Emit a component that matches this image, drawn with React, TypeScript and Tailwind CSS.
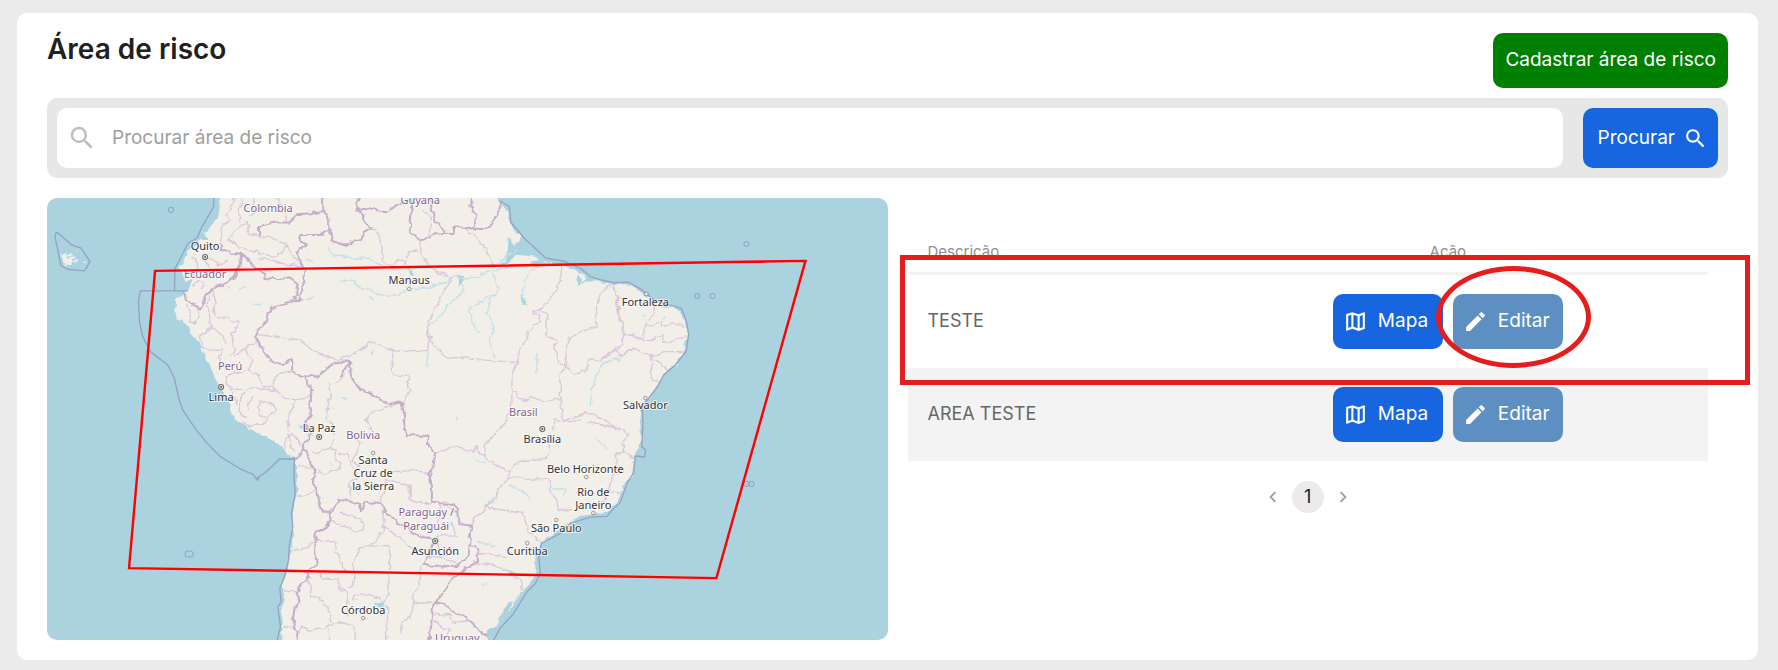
import { MdChevronLeft, MdChevronRight, MdEdit, MdOutlineMap, MdSearch } from "react-icons/md";

const LAND =
  "M517,-20 517,46 502,76 467,106 482,126 457,126 427,156 415,176 397,211 412,236 432,266 417,281 387,306 385,336 392,361 407,371 427,388 442,416 459,441 477,486 497,521 512,556 532,586 552,631 552,651 572,671 597,686 647,714 687,734 709,751 719,766 742,784 747,816 751,876 742,916 737,956 737,1026 732,1051 725,1096 719,1126 705,1161 711,1196 703,1226 703,1286 702,1346 L1329,1346 1314,1316 1334,1291 1359,1276 1389,1236 1419,1186 1449,1156 1464,1136 1464,1066 1479,1036 1509,1016 1539,991 1589,956 1629,946 1679,941 1709,916 1724,866 1754,836 1759,776 1774,746 1781,726 1779,666 1784,616 1809,596 1834,556 1859,516 1884,501 1904,466 1921,416 1914,376 1902,341 1874,328 1844,326 1819,306 1779,281 1749,259 1699,261 1659,251 1614,251 1599,261 1614,241 1589,216 1559,206 1529,198 1479,191 1464,176 1409,171 1399,166 1369,186 1399,151 1419,126 1419,106 1394,91 1384,66 1379,36 1364,16 1339,-20Z";

// each sector keeps its own origin inside the map
const SECTORS = [
  {
    origin: "translate(-3 -24)",
    countries:
      "M525,165 525,182 545,180 560,190 585,195 605,205 615,225 640,240 655,255 655,268 680,264 700,268 730,262 755,280 750,300 755,315 745,325 760,333 M585,195 580,230 565,260 545,278 530,285 510,290 495,300 478,315 470,340 462,355 445,350 440,340 420,330 415,305 M640,140 638,110 665,102 690,97 730,98 745,80 760,72 800,70 838,62 M830,24 832,60 848,95 850,120 858,150 880,165 900,162 M855,125 835,125 825,135 762,135 765,155 785,165 780,172 758,175 757,205 765,220 775,235 772,265 760,333 730,335 690,348 665,365 660,395 635,425 630,440 640,465 655,480 660,500 685,520 715,522 738,505 738,545 755,555 780,560 820,555 850,530 870,520 900,515 M775,558 785,580 800,600 792,620 790,640 795,660 790,680 775,700 785,720",
    states:
      "M560,24 555,60 540,75 550,90 530,110 520,150 525,165 M590,24 575,70 580,90 M620,24 625,70 610,80 M690,24 720,60 720,98 M600,95 570,120 545,150 M600,95 610,130 640,140 660,142 680,140 720,165 740,200 775,235 M545,150 580,170 640,190 690,200 700,190 725,170 M640,205 700,220 760,228 M635,435 760,450 800,480 850,505 900,515 M500,300 510,340 500,370 510,385 545,380 550,395 575,390 575,410 558,430 560,465 565,480 555,500 M425,345 435,375 430,400 450,400 460,375 455,355 M495,310 480,345 490,370 492,400 500,410 480,430 460,440 470,475 500,480 530,475 520,500 525,530 M500,410 530,440 540,465 M565,500 600,470 625,460 630,440 M600,475 605,500 620,515 610,540 560,550 540,560 545,585 565,600 585,595 M610,540 640,560 650,590 680,590 690,600 650,600 620,590 600,600 M680,590 685,560 710,550 738,545 M690,600 715,625 750,630 785,620 M750,630 735,660 725,690 730,720 M600,600 580,630 580,665 600,680 M620,620 605,640 605,660 M640,635 635,675 660,685 690,660 680,645 660,640 640,635 M540,575 560,610 570,640 M850,580 855,610 845,650 840,690 M470,210 500,205 515,225 540,215 M440,200 455,225 440,255 460,270 440,290 M480,215 490,235 M460,270 475,280 465,300 M870,580 900,550",
    water: "M848,170 850,190 880,200 900,198 M545,290 550,300 M580,300 600,290 M620,345 640,340 M780,210 800,215 M770,330 800,325 M855,655 860,655 M888,625 898,625",
  },
  {
    origin: "translate(879 -24)",
    countries:
      "M60,24 48,40 52,55 100,60 140,65 170,45 210,30 M52,60 70,75 68,90 95,115 75,125 60,145 20,165 0,165 M215,30 220,60 210,80 208,100 215,130 245,152 280,135 315,128 300,105 285,90 275,60 270,30 M315,128 340,130 342,110 380,115 400,110 405,75 390,50 392,24 M385,115 440,118 460,95 480,50 485,30 M0,515 30,515 32,560 60,600 85,608 140,640 185,642 195,680 195,720 M28,515 0,560",
    states:
      "M242,152 242,190 260,220 300,250 335,262 M380,120 385,130 415,145 435,175 455,220 460,228 M95,115 115,130 125,175 130,215 150,228 155,238 155,225 175,210 195,220 205,185 242,182 M335,262 320,290 258,412 268,435 262,482 155,482 135,475 115,458 85,457 75,470 45,490 30,500 0,505 M268,435 283,470 315,500 400,508 528,517 M155,485 157,553 205,560 205,585 212,600 190,642 M665,228 660,270 635,320 610,350 580,367 598,375 595,395 565,425 560,450 540,480 528,517 515,555 515,605 530,605 535,625 565,630 570,620 600,630 615,635 660,625 660,575 658,560 675,530 655,515 650,490 640,475 650,458 615,430 620,405 620,375 600,367 M820,285 830,320 835,360 850,410 845,460 800,500 775,510 745,510 740,540 705,552 675,530 680,465 690,440 720,425 770,410 765,375 775,320 800,290 820,285 M515,605 515,640 500,685 480,720 M660,625 668,695 735,668 780,680 830,720 M668,695 640,690 640,720 M75,690 100,665 160,645 M75,690 95,720 M248,60 270,85 272,110 260,145 M850,435 880,435 900,450 M830,480 842,500 880,475 900,480",
    water:
      "M0,200 50,205 90,205 130,230 M0,270 40,275 60,295 90,300 130,320 160,318 210,298 280,290 320,275 340,255 370,268 410,262 450,240 500,232 560,225 580,215 M370,270 365,310 320,350 290,390 265,405 M460,250 475,300 450,330 440,370 465,415 445,440 455,480 470,500 M390,350 430,330 470,310 M385,350 400,400 415,430 M580,235 555,265 548,310 560,350 M480,225 500,195 535,180 M590,490 590,550 M790,520 810,512 838,505 M790,515 770,550 755,600 750,650 M85,320 100,330 M260,490 260,530 M350,690 350,685 M10,625 20,622 M95,480 98,490",
  },
  {
    origin: "translate(-3 666)",
    countries:
      "M785,30 790,40 772,78 788,110 795,135 808,150 800,180 815,220 820,250 830,275 850,275 870,255 885,238 900,245 M850,275 853,300 840,322 808,340 808,400 815,430 790,445 785,470 768,490 755,520 760,545 745,560 740,600 750,630 755,660 M772,80 765,105 750,115 738,117",
    states:
      "M590,5 610,20 650,10 660,0 M712,85 720,60 740,38 755,60 765,75 M750,140 790,142 M755,225 775,230 800,212 M740,388 785,382 790,370 808,368 M808,362 865,362 870,375 863,395 885,405 885,440 900,450 M800,100 850,85 870,90 865,115 885,130 880,145 850,155 835,165 810,158 M860,60 855,80 M850,0 865,40 M855,300 885,320 900,318 M818,460 830,475 870,480 885,510 900,512 M780,480 792,500 790,525 820,532 850,570 853,600 865,612 M715,510 730,515 740,508 758,520 M712,620 740,622 M755,635 770,618 790,630 840,625 845,612 900,612 M850,625 850,660 M725,45 740,90",
    water: "M818,150 825,158 M850,125 858,132 M828,232 830,233 M762,15 770,25 M790,40 798,48",
  },
  {
    origin: "translate(879 666)",
    countries:
      "M190,0 198,45 262,48 260,75 285,100 280,135 268,165 275,200 275,248 340,252 350,265 355,310 395,318 390,370 385,405 360,430 345,440 320,440 252,435 262,410 282,362 235,345 175,310 140,280 120,252 75,245 62,270 55,250 30,245 0,238 M385,375 405,378 412,395 413,425 375,445 340,475 300,530 280,550 275,590 270,640 265,660 M280,550 300,545 320,560 340,575 380,595 410,625 435,645",
    states:
      "M285,100 340,80 400,95 410,80 415,100 432,105 M500,0 435,75 435,115 470,135 505,155 525,130 570,120 620,115 628,90 625,50 M505,155 505,175 480,200 465,235 440,262 M505,172 540,170 560,178 625,175 635,220 650,240 655,275 690,265 M440,262 520,275 545,280 560,320 560,335 595,360 605,370 M440,262 405,290 395,318 M413,400 480,405 495,412 M413,430 460,435 520,460 530,480 545,485 545,510 M160,155 235,150 268,165 M120,252 130,215 140,180 190,190 210,200 210,240 230,248 275,248 M130,260 128,320 130,330 95,375 M62,380 148,376 148,455 145,500 135,550 145,580 138,620 140,660 M62,380 40,430 45,455 40,490 28,500 M130,320 165,340 235,405 M245,440 235,500 220,515 220,550 270,548 M220,550 210,590 185,610 185,640 M275,585 330,580 M280,600 300,620 330,630 320,650 M330,580 340,610 380,600 M0,500 15,505 25,560 22,590 M40,540 45,525 80,525 120,535 130,550 M0,610 35,612 45,640 45,660 M0,280 40,285 50,300 70,305 65,330 45,335 15,315 M45,50 60,70 50,95 35,120 60,140 M0,100 20,105 30,130 50,150 M60,170 30,185 30,240 M300,250 300,285 290,310 M325,260 340,280 M335,310 345,340 M290,350 320,345 350,345 M290,370 300,410 350,400 M260,410 300,415 360,430 M675,0 690,5 720,0 M740,5 770,10 830,25 865,40 848,70 850,95 880,115 M850,95 825,110 830,150 810,185 805,215 835,218 M795,230 790,245 750,255",
    water: "M505,195 545,210 570,240 M460,235 440,262 M640,205 680,210 670,225 M410,120 435,128 M395,310 388,345 M415,365 465,380 M435,490 432,500 M45,535 50,538 M320,440 330,440 M770,60 800,80",
  },
  {
    origin: "translate(1659 -24)",
    countries: "",
    states:
      "M45,290 50,350 58,385 72,415 65,455 M165,345 155,375 135,400 132,445 M135,405 160,408 180,390 185,410 205,405 215,402 252,408 M70,432 110,440 130,450 150,452 185,435 190,460 225,448 258,438 M65,495 100,475 130,488 155,498 190,485 245,485 M150,500 205,540 M150,505 160,525 148,550 160,572 178,575 M0,505 40,480 68,495",
    water: "M10,522 30,512 58,510 M130,375 135,378 M185,385 190,380",
  },
];

const RIVER_MOUTHS =
  "M1384,121 1414,161 1384,196 1359,206 1379,181Z M1452,191 1475,187 1495,196 1460,205Z M1592,230 1604,246 1596,264 1587,245Z M1419,290 1429,300 1436,322 1424,318Z M1229,230 1254,236 1249,248 1235,262Z M1384,1216 1397,1209 1377,1256 1349,1286 1359,1246Z M1319,1296 1334,1292 1319,1321 1309,1316Z M979,1218 1013,1210 1007,1226 991,1224Z M1079,211 1099,221 1104,233 1089,228Z M757,676 765,682 772,697 759,692Z M419,251 435,241 429,266Z";

const MARITIME =
  "M500,0 500,26 465,86 450,120 423,136 400,181 384,211 382,277 M422,279 280,279 274,310 278,376 287,416 310,461 362,501 382,541 395,601 407,636 434,676 447,695 480,736 520,776 580,813 618,829 631,847 635,840 M628,842 660,819 697,783 742,783 740,826 744,886 733,946 737,986 726,1046 724,1086 712,1136 698,1171 702,1211 692,1226 700,1286 690,1326 M1359,10 1386,26 1391,74 1434,124 1495,180 1549,190 1599,211 1629,236 1659,245 1699,254 1744,253 1784,276 1819,305 1874,323 1902,331 1917,370 1924,411 1916,460 1884,501 1849,531 1831,565 1800,606 1784,620 1787,676 1783,746 1795,756 1791,777 1764,774 1759,824 1739,856 1719,913 1694,936 1679,955 1629,957 1569,976 1539,1006 1482,1036 1475,1080 1479,1126 1464,1156 1439,1181 1399,1246 1359,1290 1339,1326 M27,104 33,105 75,142 102,151 129,191 113,219 62,214 42,204 24,116Z";

const CITIES = [
  { name: "Quito", x: 158, y: 52, dot: [158, 59], capital: true },
  { name: "Lima", x: 174, y: 203, dot: [174, 189], capital: true },
  { name: "La Paz", x: 272, y: 234, dot: [272, 239], capital: true },
  { name: "Manaus", x: 362, y: 86, dot: [362, 91] },
  { name: "Fortaleza", x: 598, y: 108, dot: [599, 96] },
  { name: "Salvador", x: 598, y: 211, dot: [598, 200] },
  { name: "Brasília", x: 495, y: 245, dot: [495, 231], capital: true },
  { name: "Belo Horizonte", x: 538, y: 275, dot: [539, 279] },
  { name: "Rio de", x: 546, y: 298 },
  { name: "Janeiro", x: 546, y: 311, dot: [546, 315] },
  { name: "São Paulo", x: 509, y: 334, dot: [509, 322] },
  { name: "Curitiba", x: 480, y: 357, dot: [480, 345] },
  { name: "Santa", x: 326, y: 266, dot: [326, 255] },
  { name: "Cruz de", x: 326, y: 279 },
  { name: "la Sierra", x: 326, y: 292 },
  { name: "Asunción", x: 388, y: 357, dot: [388, 343], capital: true },
  { name: "Córdoba", x: 316, y: 416, dot: [316, 420] },
];

const COUNTRIES = [
  { name: "Colombia", x: 221, y: 14 },
  { name: "Guyana", x: 373, y: 6 },
  { name: "Ecuador", x: 158, y: 80 },
  { name: "Perú", x: 183, y: 172 },
  { name: "Brasil", x: 476, y: 218 },
  { name: "Bolivia", x: 316, y: 241 },
  { name: "Paraguay /", x: 379, y: 318 },
  { name: "Paraguái", x: 379, y: 332 },
  { name: "Uruguay", x: 410, y: 444 },
];

const ISLANDS = [
  [124, 12],
  [699, 46],
  [650, 98],
  [665, 98],
  [699, 286],
  [704, 286],
];

const areas = ["TESTE", "AREA TESTE"];

const RiskMap = () => (
  <svg
    viewBox="0 0 840 442"
    preserveAspectRatio="xMidYMid slice"
    className="block h-[442px] w-full rounded-[10px] bg-[#aad3df] font-['Noto_Sans',sans-serif]"
    role="img"
    aria-label="Mapa da área de risco"
  >
    {/* roughens the coast and the borders */}
    <filter id="rough" x="-5%" y="-5%" width="110%" height="110%" colorInterpolationFilters="sRGB">
      <feTurbulence type="fractalNoise" baseFrequency="0.045" numOctaves="2" seed="4" />
      <feDisplacementMap in="SourceGraphic" scale="18" xChannelSelector="R" yChannelSelector="G" />
    </filter>
    <g transform="scale(0.333333)" fill="none" strokeLinejoin="round" strokeLinecap="round">
      <g filter="url(#rough)">
        <path d={LAND} fill="#f2efe9" />
        <path
          d="M45,172 58,165 60,180 50,184Z M50,185 66,184 68,198 52,196Z M68,180 80,178 M72,192 84,190 M82,188 90,186 M66,170 68,172 M84,160 86,160 M116,190 118,192"
          fill="#f2efe9"
          stroke="#f2efe9"
          strokeWidth="6"
        />
        <path d={RIVER_MOUTHS} fill="#aad3df" />
        {SECTORS.map((sector) => (
          <g key={sector.origin} transform={sector.origin}>
            <path d={sector.water} stroke="#c3e0e8" strokeWidth="4" />
            <path d={sector.states} stroke="#d9c8da" strokeWidth="4" />
            <path d={sector.countries} stroke="#c4aec8" strokeWidth="6" />
          </g>
        ))}
      </g>
      <path d={MARITIME} stroke="#97a2c2" strokeWidth="4" />
    </g>

    {ISLANDS.map(([x, y]) => (
      <circle key={`${x}-${y}`} cx={x} cy={y} r="2.5" fill="none" stroke="#97a2c2" />
    ))}
    <rect x="138" y="353" width="8" height="6" rx="3" fill="none" stroke="#97a2c2" />

    {CITIES.map((city) => (
      <g key={city.name}>
        {city.dot && (
          <circle cx={city.dot[0]} cy={city.dot[1]} r={city.capital ? 2.5 : 1.8} fill="#f2efe9" stroke="#66665c" strokeWidth={city.capital ? 1 : 0.6} />
        )}
        {city.dot && city.capital && <circle cx={city.dot[0]} cy={city.dot[1]} r="1" fill="#55554c" />}
        <text x={city.x} y={city.y} textAnchor="middle" fill="#333" stroke="#fff" strokeOpacity="0.7" strokeWidth="2" paintOrder="stroke" className="text-[11px]">
          {city.name}
        </text>
      </g>
    ))}
    {COUNTRIES.map((country) => (
      <text key={country.name} x={country.x} y={country.y} textAnchor="middle" fill="#826390" stroke="#fff" strokeOpacity="0.7" strokeWidth="2" paintOrder="stroke" className="text-[11px]">
        {country.name}
      </text>
    ))}

    <path d="M108,73 L758,63 L669,380 L82,370Z" fill="none" stroke="#ff0000" strokeWidth="2.4" />
  </svg>
);

const App = () => {
  return (
    <div className="bg-[#ebebeb] pt-[13px] pr-5 pb-[10px] pl-[17px] font-['Inter',sans-serif]">
      <main className="rounded-[10px] bg-white px-[30px] py-5">
        {/* HEADER */}
        <div className="flex items-start justify-between">
          <h1 className="text-[28px] leading-8 font-semibold text-[#212121]">Área de risco</h1>
          <button className="h-[55px] cursor-pointer rounded-[10px] bg-[#008000] px-3 text-[19px] text-white">
            Cadastrar área de risco
          </button>
        </div>

        {/* SEARCH */}
        <form className="mt-[10px] flex gap-5 rounded-[10px] bg-[#e7e7e7] p-[10px]">
          <label className="flex h-[60px] flex-1 items-center gap-[15px] rounded-[10px] bg-white px-[10px]">
            <MdSearch className="size-[30px] text-[#bdbdbd]" />
            <input
              type="text"
              aria-label="Procurar área de risco"
              placeholder="Procurar área de risco"
              className="min-w-0 flex-1 text-[19px] outline-none placeholder:text-[#9e9e9e]"
            />
          </label>
          <button type="button" className="flex h-[60px] cursor-pointer items-center gap-2 rounded-[10px] bg-[#1766e0] pr-[10px] pl-[15px] text-[19px] text-white">
            Procurar
            <MdSearch className="size-[25px]" />
          </button>
        </form>

        <div className="mt-5 grid grid-cols-2">
          <RiskMap />

          {/* TABLE */}
          <div className="relative px-5 pt-[38px]">
            <table className="w-full text-left">
              <thead>
                <tr className="h-[37px] border-b-[3px] border-[#f3f3f3] text-[15px] text-[#8f8f8f]">
                  <th className="w-[35%] px-5 pb-1 font-normal">Descrição</th>
                  <th className="pb-1 text-center font-normal">Ação</th>
                </tr>
              </thead>
              <tbody>
                {areas.map((area) => (
                  <tr key={area} className="text-lg text-[#666] even:bg-[#f3f3f3]">
                    <td className="px-5">{area}</td>
                    <td className="py-[19px]">
                      <div className="flex justify-center gap-[10px] text-[19px] text-white">
                        <button className="flex h-[55px] w-[110px] cursor-pointer items-center gap-[10px] rounded-[10px] bg-[#1766e0] pl-[10px]">
                          <MdOutlineMap className="size-[25px]" />
                          Mapa
                        </button>
                        <button className="flex h-[55px] w-[110px] cursor-pointer items-center gap-[10px] rounded-[10px] bg-[#5e8fc3] pl-[10px]">
                          <MdEdit className="size-[25px]" />
                          Editar
                        </button>
                      </div>
                    </td>
                  </tr>
                ))}
              </tbody>
            </table>

            <nav className="mt-5 flex items-center justify-center gap-2 text-[#9e9e9e]">
              <button aria-label="Página anterior" className="cursor-pointer">
                <MdChevronLeft className="size-[22px]" />
              </button>
              <button className="size-8 cursor-pointer rounded-full bg-[#ebebeb] text-lg text-[#212121]">1</button>
              <button aria-label="Próxima página" className="cursor-pointer">
                <MdChevronRight className="size-[22px]" />
              </button>
            </nav>

            {/* HIGHLIGHT */}
            <div className="pointer-events-none absolute top-[57px] right-[-22px] left-3 h-[130px] border-[5px] border-[#e71c1c]" />
            <div className="pointer-events-none absolute top-[68px] right-[137px] h-[102px] w-[155px] rounded-[50%] border-[5px] border-[#e71c1c]" />
          </div>
        </div>
      </main>
    </div>
  );
};

export default App;
